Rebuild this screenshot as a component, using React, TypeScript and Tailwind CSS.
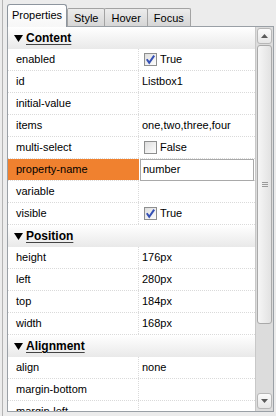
import React from 'react';

type Row =
  | { kind: 'header'; title: string }
  | { kind: 'text'; label: string; value?: string }
  | { kind: 'check'; label: string; checked: boolean }
  | { kind: 'input'; label: string; value: string };

const rows: Row[] = [
  { kind: 'header', title: 'Content' },
  { kind: 'check', label: 'enabled', checked: true },
  { kind: 'text', label: 'id', value: 'Listbox1' },
  { kind: 'text', label: 'initial-value' },
  { kind: 'text', label: 'items', value: 'one,two,three,four' },
  { kind: 'check', label: 'multi-select', checked: false },
  { kind: 'input', label: 'property-name', value: 'number' },
  { kind: 'text', label: 'variable' },
  { kind: 'check', label: 'visible', checked: true },
  { kind: 'header', title: 'Position' },
  { kind: 'text', label: 'height', value: '176px' },
  { kind: 'text', label: 'left', value: '280px' },
  { kind: 'text', label: 'top', value: '184px' },
  { kind: 'text', label: 'width', value: '168px' },
  { kind: 'header', title: 'Alignment' },
  { kind: 'text', label: 'align', value: 'none' },
  { kind: 'text', label: 'margin-bottom' },
  { kind: 'text', label: 'margin-left' },
];

const CheckBox = ({ checked }: { checked: boolean }) => (
  <svg width="13" height="13" viewBox="0 0 13 13" className="shrink-0">
    <defs>
      <linearGradient id="cb" x1="0" y1="0" x2="1" y2="1">
        <stop offset="0" stopColor="#dcdcdc" />
        <stop offset="1" stopColor="#ffffff" />
      </linearGradient>
    </defs>
    <rect x="0.5" y="0.5" width="12" height="12" fill="url(#cb)" stroke="#8e8f8f" />
    {checked && (
      <path d="M2.8 6.3 L5.2 9.8 L10.2 2.6" fill="none" stroke="#3550b5" strokeWidth="2" />
    )}
  </svg>
);

const Tab = ({ label, active }: { label: string; active?: boolean }) =>
  active ? (
    <div className="relative z-10 -mb-px flex h-[23px] w-[60px] items-center justify-center rounded-t-[3px] border border-b-0 border-[#8d959e] bg-gradient-to-b from-[#ffffff] to-[#f7f7f7] pb-[2px] text-[11px] text-black">
      {label}
    </div>
  ) : (
    <div className="-ml-px flex h-[18px] items-center justify-center rounded-t-[2px] border border-b-0 border-[#a3a3a3] bg-gradient-to-b from-[#ececec] to-[#d6d6d6] px-[6px] pt-[1px] text-[11px] text-black">
      {label}
    </div>
  );

const PropRow = ({ row }: { row: Row }) => {
  if (row.kind === 'header') {
    return (
      <div className="flex h-[22px] shrink-0 items-center bg-gradient-to-b from-[#ffffff] to-[#e9e9e9] pl-[6px]">
        <svg width="9" height="7" viewBox="0 0 9 7" className="mr-[3px] shrink-0">
          <path d="M0 0 L9 0 L4.5 7 Z" fill="#000" />
        </svg>
        <span className="text-[12px] font-bold text-black underline decoration-[#444] underline-offset-[2px]">
          {row.title}
        </span>
      </div>
    );
  }
  const orange = row.kind === 'input';
  return (
    <div className="flex h-[22px] shrink-0 border-b border-dotted border-[#dadada]">
      <div
        className={
          orange
            ? 'flex w-[131px] shrink-0 items-center bg-[#f0812f] pl-[8px] text-[11px] text-black'
            : 'flex w-[131px] shrink-0 items-center border-r border-dotted border-[#dadada] pl-[8px] text-[11px] text-black'
        }
      >
        {row.label}
      </div>
      <div className="flex min-w-0 flex-1 items-center text-[11px] text-black">
        {row.kind === 'text' && <span className="pl-[3px]">{row.value}</span>}
        {row.kind === 'check' && (
          <div className="flex items-center gap-[3px] pl-[5px]">
            <CheckBox checked={row.checked} />
            <span>{row.checked ? 'True' : 'False'}</span>
          </div>
        )}
        {row.kind === 'input' && (
          <div className="ml-[1px] flex h-[22px] w-[114px] items-center border border-[#a9a9a9] bg-white pl-[2px]">
            {row.value}
          </div>
        )}
      </div>
    </div>
  );
};

const ScrollButton = ({ up }: { up?: boolean }) => (
  <div className="mx-[1px] flex h-[16px] shrink-0 items-center justify-center rounded-[3px] border border-[#b7b7b7] bg-gradient-to-b from-[#fbfbfb] to-[#e6e6e6]">
    <svg width="7" height="4" viewBox="0 0 7 4">
      <path d={up ? 'M0 4 L3.5 0 L7 4 Z' : 'M0 0 L3.5 4 L7 0 Z'} fill="#5a5a5a" />
    </svg>
  </div>
);

export default function App() {
  return (
    <div
      className="h-[416px] w-[276px] overflow-hidden bg-[#ececec]"
      style={{ fontFamily: '"Liberation Sans", Arial, sans-serif' }}
    >
      <div className="ml-[2px] h-full border-l border-[#b4b4b4] pl-[4px] pt-[4px]">
        <div className="flex h-[22px] items-end">
          <Tab label="Properties" active />
          <div className="flex items-end pl-px">
            <Tab label="Style" />
            <Tab label="Hover" />
            <Tab label="Focus" />
          </div>
        </div>
        <div className="flex h-[386px] w-[267px] border border-[#9aa0a6] bg-white">
          <div className="flex min-w-0 flex-1 flex-col overflow-hidden border-r border-[#c8c8c8]">
            {rows.map((r, i) => (
              <PropRow key={i} row={r} />
            ))}
          </div>
          <div className="flex w-[17px] shrink-0 flex-col bg-[#dcdcdc] pt-[1px] pb-[2px]">
            <ScrollButton up />
            <div className="mx-[1px] mt-[1px] flex h-[279px] shrink-0 items-center justify-center rounded-[3px] border border-[#a9a9a9] bg-gradient-to-r from-[#f6f6f6] to-[#e2e2e2]">
              <div className="flex flex-col gap-[1px]">
                <div className="h-px w-[6px] bg-[#9a9a9a]" />
                <div className="h-px w-[6px] bg-[#9a9a9a]" />
                <div className="h-px w-[6px] bg-[#9a9a9a]" />
              </div>
            </div>
            <div className="flex-1" />
            <ScrollButton />
          </div>
        </div>
      </div>
    </div>
  );
}
